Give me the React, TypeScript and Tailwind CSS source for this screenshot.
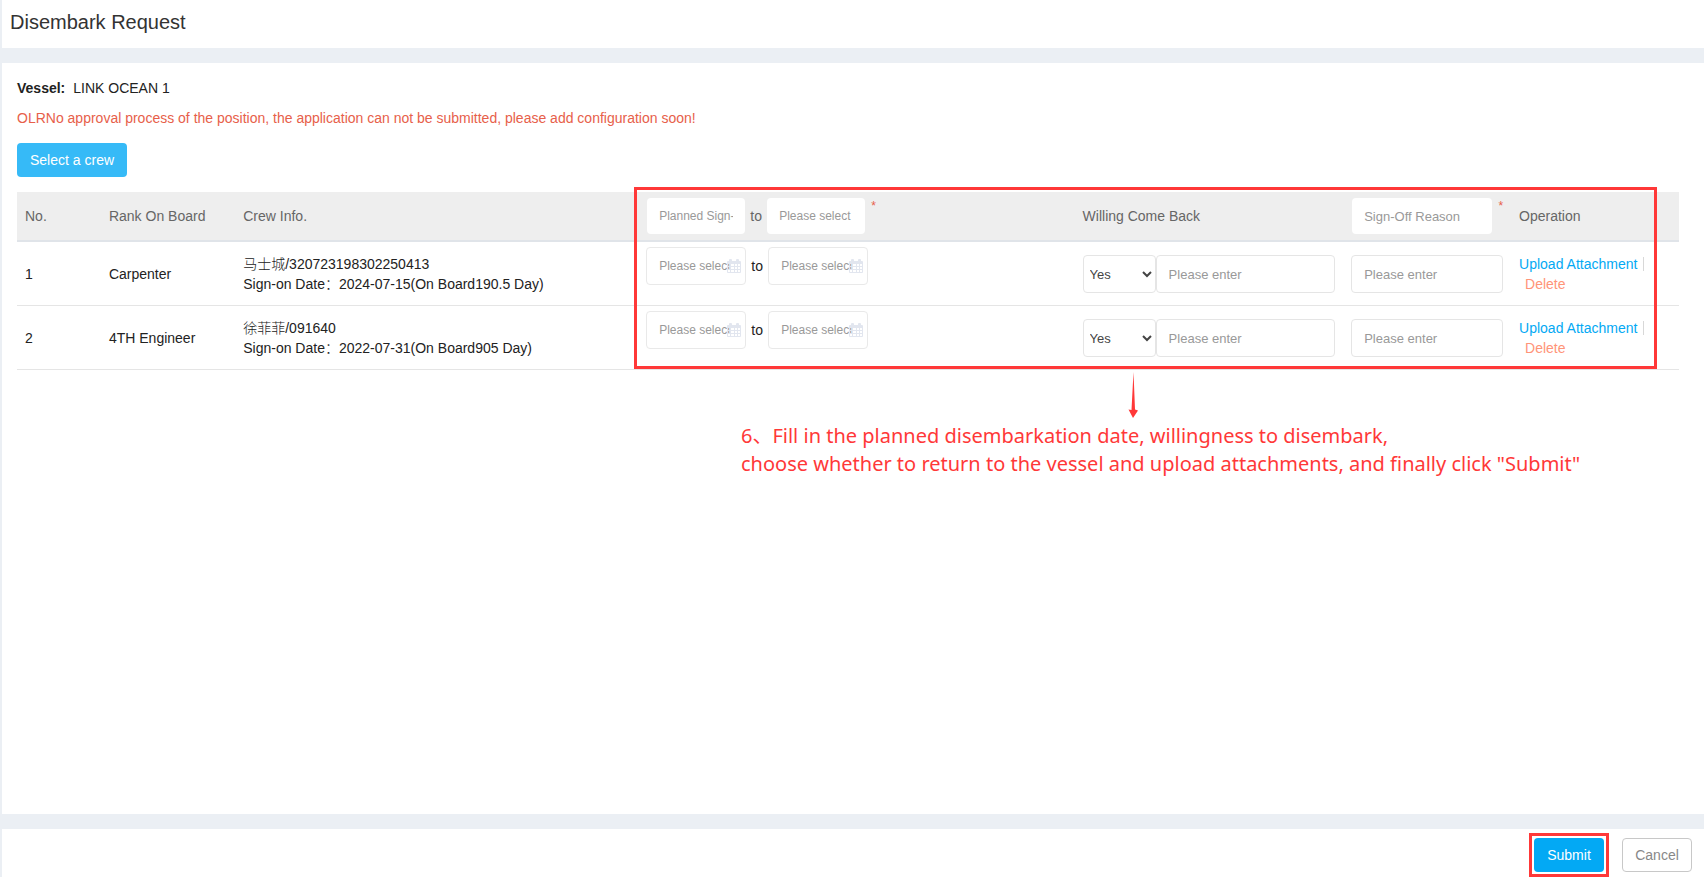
import React, { useState } from 'react';

interface CrewMember {
  id: number;
  rank: string;
  name: string;
  code: string;
  signOnDate: string;
  daysOnBoard: string;
}

const crewMembers: CrewMember[] = [
  {
    id: 1,
    rank: 'Carpenter',
    name: '马士城',
    code: '320723198302250413',
    signOnDate: '2024-07-15',
    daysOnBoard: '190.5',
  },
  {
    id: 2,
    rank: '4TH Engineer',
    name: '徐菲菲',
    code: '091640',
    signOnDate: '2022-07-31',
    daysOnBoard: '905',
  },
];

const CalendarIcon: React.FC = () => (
  <svg
    width="14"
    height="14"
    viewBox="0 0 14 14"
    className="pointer-events-none absolute right-[5px] top-3"
    aria-hidden="true"
  >
    <path
      className="fill-[#e2e6ef]"
      fillRule="evenodd"
      d="M1 2h1V1a1 1 0 0 1 1-1h1a1 1 0 0 1 1 1v1h4V1a1 1 0 0 1 1-1h1a1 1 0 0 1 1 1v1h1a1 1 0 0 1 1 1v10a1 1 0 0 1-1 1H1a1 1 0 0 1-1-1V3a1 1 0 0 1 1-1zM1 5v2h2V5zm3 0v2h3V5zm4 0v2h2V5zm3 0v2h2V5zM1 8v2h2V8zm3 0v2h3V8zm4 0v2h2V8zm3 0v2h2V8zM1 11v2h2v-2zm3 0v2h3v-2zm4 0v2h2v-2zm3 0v2h2v-2z"
    />
  </svg>
);

const DateField: React.FC<{ label: string }> = ({ label }) => (
  <div className="relative w-[100px]">
    <input
      type="text"
      aria-label={label}
      placeholder="Please select"
      className="block h-[38px] w-full rounded border border-[#e9e9e9] bg-white px-3 text-xs placeholder:text-[#999]"
    />
    <CalendarIcon />
  </div>
);

const Required: React.FC = () => (
  <span className="ml-[6px] self-start text-xs leading-4 text-[#e7604a]">*</span>
);

const CrewRow: React.FC<{ member: CrewMember }> = ({ member }) => {
  const [willing, setWilling] = useState('Yes');

  return (
    <tr className="h-16 border-b border-[#e5e5e5]">
      <td className="px-2 pt-[2px]">{member.id}</td>
      <td className="px-2 pt-[2px]">{member.rank}</td>
      <td className="px-2 pt-[2px] font-light">
        <div>
          {member.name}/{member.code}
        </div>
        <div>
          Sign-on Date：{member.signOnDate}(On Board{member.daysOnBoard} Day)
        </div>
      </td>
      <td className="px-2 pt-[5px] align-top">
        <div className="flex items-center">
          <DateField label={`Planned sign-off from, ${member.rank}`} />
          <span className="w-[22px] text-center">to</span>
          <DateField label={`Planned sign-off to, ${member.rank}`} />
        </div>
      </td>
      <td className="px-2 pt-[2px]">
        <div className="flex">
          <select
            aria-label={`Willing come back, ${member.rank}`}
            value={willing}
            onChange={(e) => setWilling(e.target.value)}
            className="h-[38px] w-[73px] rounded border border-[#e5e5e5] bg-white pl-[2px] text-[13px] text-[#444]"
          >
            <option>Yes</option>
            <option>No</option>
          </select>
          <input
            type="text"
            aria-label={`Remark, ${member.rank}`}
            placeholder="Please enter"
            className="h-[38px] min-w-0 flex-1 rounded border border-[#e5e5e5] bg-white px-3 text-[13px] placeholder:text-[#999]"
          />
        </div>
      </td>
      <td className="px-2 pt-[2px]">
        <input
          type="text"
          aria-label={`Sign-off reason, ${member.rank}`}
          placeholder="Please enter"
          className="block h-[38px] w-full rounded border border-[#e5e5e5] bg-white px-3 text-[13px] placeholder:text-[#999]"
        />
      </td>
      <td className="px-2 pt-[2px]">
        <div className="flex items-center gap-[6px]">
          <a href="#upload" className="whitespace-nowrap text-[#03a9f4]">
            Upload Attachment
          </a>
          <span className="h-[14px] w-px bg-[#d8d8d8]" />
        </div>
        <a href="#delete" className="ml-[6px] text-[#ff9478]">
          Delete
        </a>
      </td>
    </tr>
  );
};

const Annotation: React.FC = () => (
  <>
    <div className="pointer-events-none absolute -top-[5px] bottom-px left-[37.1%] right-[22px] border-3 border-[#ff3838]" />
    <div className="absolute left-[43.5%] top-full mt-[2px] whitespace-nowrap pl-px text-[#ff3838]">
      <svg width="10" height="46" viewBox="0 0 10 46" className="ml-[387px] fill-[#ff3838]" aria-hidden="true">
        <path d="M5.5 0L7 37.5L10 38.5L5 46L0.5 37.5L3.5 38Z" />
      </svg>
      <p className="mt-1 font-['Noto_Sans','Noto_Sans_CJK_SC',sans-serif] text-[20px] leading-7">
        6、Fill in the planned disembarkation date, willingness to disembark,
        <br />
        choose whether to return to the vessel and upload attachments, and finally click "Submit"
      </p>
    </div>
  </>
);

const App: React.FC = () => {
  return (
    <div className="flex min-h-screen flex-col gap-[15px] bg-[#ebeff4] pl-[2px] font-['Liberation_Sans','Noto_Sans_CJK_SC',sans-serif] text-sm text-[#222]">
      <header className="h-12 bg-white px-2 pt-2">
        <h1 className="text-xl leading-7 text-[#333]">Disembark Request</h1>
      </header>

      <main className="flex-1 bg-white pb-6 pl-[15px] pr-[25px] pt-[15px]">
        <p>
          <strong className="mr-2">Vessel:</strong>LINK OCEAN 1
        </p>
        <p className="mt-[10px] text-[#e7604a]">
          OLRNo approval process of the position, the application can not be submitted, please add configuration soon!
        </p>
        <button type="button" className="mt-[15px] block h-[34px] rounded bg-[#36baf7] px-[13px] text-white">
          Select a crew
        </button>

        <div className="relative mt-[15px]">
          <table className="w-full table-fixed border-collapse text-left leading-5">
            <colgroup>
              <col className="w-[5%]" />
              <col className="w-[8%]" />
              <col className="w-[24%]" />
              <col className="w-[26%]" />
              <col className="w-[16%]" />
              <col className="w-[10%]" />
              <col className="w-[10%]" />
            </colgroup>
            <thead>
              <tr className="h-[49px] border-b-2 border-[#e0e4e9] bg-[#eee] text-[#666]">
                <th className="px-2 font-normal">No.</th>
                <th className="px-2 font-normal">Rank On Board</th>
                <th className="px-2 font-normal">Crew Info.</th>
                <th className="px-2 font-normal">
                  <div className="flex items-center pl-px">
                    <input
                      type="text"
                      aria-label="Planned sign-off from"
                      placeholder="Planned Sign-off Date"
                      className="h-9 w-[98px] rounded bg-white px-3 text-xs placeholder:text-[#999]"
                    />
                    <span className="w-[22px] text-center">to</span>
                    <input
                      type="text"
                      aria-label="Planned sign-off to"
                      placeholder="Please select"
                      className="h-9 w-[98px] rounded bg-white px-3 text-xs placeholder:text-[#999]"
                    />
                    <Required />
                  </div>
                </th>
                <th className="px-2 font-normal">Willing Come Back</th>
                <th className="px-2 font-normal">
                  <div className="flex items-center pl-px">
                    <input
                      type="text"
                      aria-label="Sign-off reason"
                      placeholder="Sign-Off Reason"
                      className="h-9 min-w-0 flex-1 rounded bg-white px-3 text-[13px] placeholder:text-[#999]"
                    />
                    <Required />
                  </div>
                </th>
                <th className="px-2 font-normal">Operation</th>
              </tr>
            </thead>
            <tbody>
              {crewMembers.map((member) => (
                <CrewRow key={member.id} member={member} />
              ))}
            </tbody>
          </table>
          <Annotation />
        </div>
      </main>

      <footer className="flex h-12 items-start justify-end gap-[18px] bg-white pr-3 pt-[9px]">
        <div className="relative">
          <button type="button" className="h-[34px] w-[70px] rounded bg-[#03a9f4] text-white">
            Submit
          </button>
          <div className="pointer-events-none absolute -inset-[5px] border-3 border-[#ff3838]" />
        </div>
        <button type="button" className="h-[34px] w-[70px] rounded border border-[#c8c8c8] bg-white text-[#888]">
          Cancel
        </button>
      </footer>
    </div>
  );
};

export default App;
